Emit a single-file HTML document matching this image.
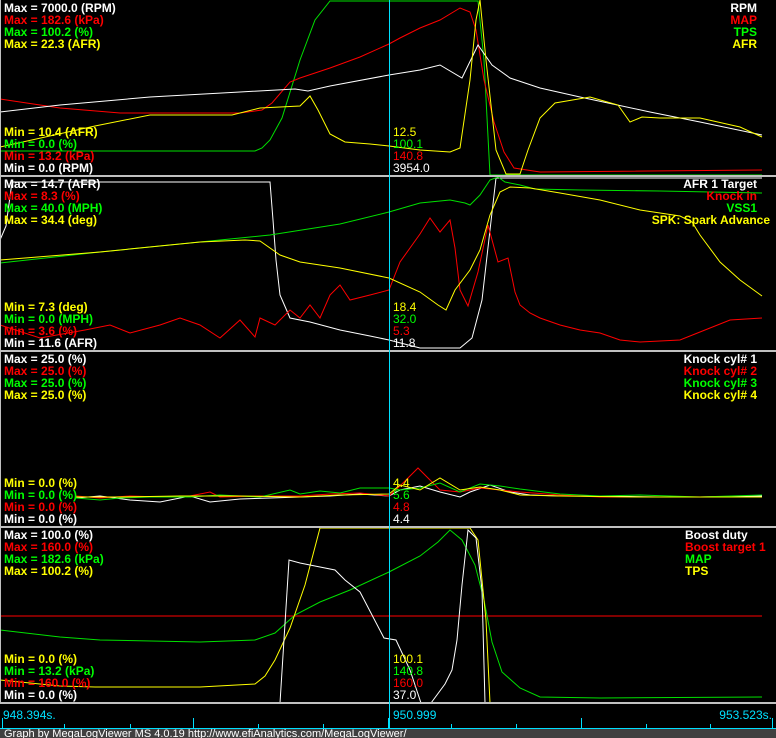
<!DOCTYPE html>
<html><head><meta charset="utf-8"><style>
html,body{margin:0;padding:0;background:#000;}
svg{display:block}
text{font-family:"Liberation Sans",Arial,sans-serif;font-size:12px;}
.b{font-weight:bold}
.r{text-anchor:end}
</style></head><body>
<svg width="776" height="738" viewBox="0 0 776 738" xmlns="http://www.w3.org/2000/svg">
<rect width="776" height="738" fill="#000"/>
<g fill="none" stroke-width="1">
<!-- Panel 1 -->
<polyline stroke="#00e000" points="0,151 255,151 262,148 270,140 282,118 300,60 315,20 330,1 478,1 484,60 490,175 762,175"/>
<polyline stroke="#ff0000" points="0,99 60,108 120,113 240,113 262,110 272,103 290,82 300,78 330,68 360,57 389,44 400,38 420,28 440,20 460,8 470,12 476,30 484,80 494,122 504,152 514,168 540,172 762,170"/>
<polyline stroke="#ffffff" points="0,112 60,105 150,97 240,92 295,89 308,91 330,86 389,75 420,70 440,65 462,78 478,45 492,65 510,78 540,88 580,97 650,112 700,122 762,135"/>
<polyline stroke="#ffff00" points="0,147 95,126 150,115 232,115 260,108 300,106 310,96 318,110 330,134 345,142 370,144 389,146 420,150 450,152 460,148 470,80 476,20 480,0 486,60 496,150 506,174 520,174 528,150 540,118 555,103 590,97 618,105 630,122 642,117 660,118 700,118 740,127 762,137"/>
<!-- Panel 2 -->
<polyline stroke="#ffffff" points="0,240 6,226 12,182 270,182 273,220 276,260 280,295 290,318 310,322 340,330 370,336 389,340 420,348 460,348 472,338 482,300 490,230 496,178 762,178"/>
<polyline stroke="#00e000" points="0,263 100,252 200,242 270,235 340,224 389,212 420,203 450,200 465,203 470,205 480,195 490,180 498,177 505,182 520,185 535,189 580,190 660,191 762,193"/>
<polyline stroke="#ff0000" points="0,325 40,338 85,330 110,325 130,333 160,325 180,318 200,325 220,338 240,320 255,337 260,318 275,325 290,310 300,318 310,305 320,318 330,295 340,285 350,300 370,295 389,290 400,262 410,248 420,234 430,218 440,232 450,220 455,248 460,290 468,306 478,272 488,225 498,262 508,258 515,292 520,305 530,313 540,318 560,325 580,330 600,333 620,340 640,342 680,340 700,332 730,320 762,318"/>
<polyline stroke="#ffff00" points="0,260 100,252 200,242 245,240 260,241 280,255 300,262 340,268 389,278 420,292 438,305 446,310 455,290 470,270 480,250 490,215 500,192 510,187 530,188 560,193 600,200 640,210 680,216 692,222 700,235 720,262 740,280 762,296"/>
<!-- Panel 3 -->
<polyline stroke="#ffffff" points="76,498 100,496 130,500 160,502 190,496 210,502 240,499 270,498 300,497 330,496 360,494 389,496 400,490 420,486 440,492 460,497 470,492 490,485 510,492 530,495 560,496 600,496 660,497 700,497 762,496"/>
<polyline stroke="#ff0000" points="76,496 100,498 130,496 160,497 190,496 210,492 220,497 260,496 300,496 330,494 360,493 389,496 400,486 418,468 430,480 440,490 460,492 480,488 500,490 520,492 560,495 600,497 700,497 762,497"/>
<polyline stroke="#00e000" points="76,498 100,500 120,498 150,497 190,497 220,495 260,497 290,490 300,494 320,491 340,493 360,488 389,488 400,490 420,488 440,483 460,492 480,484 500,486 520,489 560,494 600,496 640,495 700,497 762,495"/>
<polyline stroke="#ffff00" points="76,497 120,497 180,496 240,496 300,497 340,495 389,494 400,485 420,490 440,478 460,490 480,487 500,490 520,495 560,496 640,497 700,497 762,497"/>
<!-- Panel 4 -->
<polyline stroke="#ff0000" points="0,616 762,616"/>
<polyline stroke="#00e000" points="0,630 60,637 100,640 200,642 255,640 275,633 295,615 320,602 350,590 389,572 420,556 438,542 450,530 462,540 475,565 484,600 492,642 502,672 520,688 540,697 600,698 762,697"/>
<polyline stroke="#ffff00" points="0,680 60,686 95,687 200,687 255,684 265,676 275,660 290,628 305,585 320,528 470,528 478,540 486,620 490,703 762,703"/>
<polyline stroke="#ffffff" points="280,703 289,560 300,563 315,566 335,570 345,580 360,592 372,615 384,638 396,640 410,670 421,703 431,703 445,684 452,670 457,640 462,585 468,530 476,538 482,590 485,703"/>
</g>
<!-- separators -->
<g fill="#c0c0c0">
<rect x="0" y="175" width="776" height="2"/>
<rect x="0" y="350" width="776" height="2"/>
<rect x="0" y="526" width="776" height="2"/>
<rect x="0" y="702" width="776" height="2"/>
<rect x="0" y="0" width="1" height="703"/>
</g>
<!-- cursor -->
<rect x="389" y="0" width="1" height="730" fill="#00e0ff"/>
<!-- Panel 1 labels -->
<g class="b">
<text x="4" y="12" fill="#fff">Max = 7000.0 (RPM)</text>
<text x="4" y="24" fill="#f00">Max = 182.6 (kPa)</text>
<text x="4" y="36" fill="#0f0">Max = 100.2 (%)</text>
<text x="4" y="48" fill="#ff0">Max = 22.3 (AFR)</text>
<text x="4" y="136" fill="#ff0">Min = 10.4 (AFR)</text>
<text x="4" y="148" fill="#0f0">Min = 0.0 (%)</text>
<text x="4" y="160" fill="#f00">Min = 13.2 (kPa)</text>
<text x="4" y="172" fill="#fff">Min = 0.0 (RPM)</text>
<text x="757" y="12" class="r" fill="#fff">RPM</text>
<text x="757" y="24" class="r" fill="#f00">MAP</text>
<text x="757" y="36" class="r" fill="#0f0">TPS</text>
<text x="757" y="48" class="r" fill="#ff0">AFR</text>
</g>
<text x="393" y="136" fill="#ff0">12.5</text>
<text x="393" y="148" fill="#0f0">100.1</text>
<text x="393" y="160" fill="#f00">140.8</text>
<text x="393" y="172" fill="#fff">3954.0</text>
<!-- Panel 2 -->
<g class="b">
<text x="4" y="188" fill="#fff">Max = 14.7 (AFR)</text>
<text x="4" y="200" fill="#f00">Max = 8.3 (%)</text>
<text x="4" y="212" fill="#0f0">Max = 40.0 (MPH)</text>
<text x="4" y="224" fill="#ff0">Max = 34.4 (deg)</text>
<text x="4" y="311" fill="#ff0">Min = 7.3 (deg)</text>
<text x="4" y="323" fill="#0f0">Min = 0.0 (MPH)</text>
<text x="4" y="335" fill="#f00">Min = 3.6 (%)</text>
<text x="4" y="347" fill="#fff">Min = 11.6 (AFR)</text>
<text x="757" y="188" class="r" fill="#fff">AFR 1 Target</text>
<text x="757" y="200" class="r" fill="#f00">Knock in</text>
<text x="757" y="212" class="r" fill="#0f0">VSS1</text>
<text x="770" y="224" class="r" fill="#ff0">SPK: Spark Advance</text>
</g>
<text x="393" y="311" fill="#ff0">18.4</text>
<text x="393" y="323" fill="#0f0">32.0</text>
<text x="393" y="335" fill="#f00">5.3</text>
<text x="393" y="347" fill="#fff">11.8</text>
<!-- Panel 3 -->
<g class="b">
<text x="4" y="363" fill="#fff">Max = 25.0 (%)</text>
<text x="4" y="375" fill="#f00">Max = 25.0 (%)</text>
<text x="4" y="387" fill="#0f0">Max = 25.0 (%)</text>
<text x="4" y="399" fill="#ff0">Max = 25.0 (%)</text>
<text x="4" y="487" fill="#ff0">Min = 0.0 (%)</text>
<text x="4" y="499" fill="#0f0">Min = 0.0 (%)</text>
<text x="4" y="511" fill="#f00">Min = 0.0 (%)</text>
<text x="4" y="523" fill="#fff">Min = 0.0 (%)</text>
<text x="757" y="363" class="r" fill="#fff">Knock cyl# 1</text>
<text x="757" y="375" class="r" fill="#f00">Knock cyl# 2</text>
<text x="757" y="387" class="r" fill="#0f0">Knock cyl# 3</text>
<text x="757" y="399" class="r" fill="#ff0">Knock cyl# 4</text>
</g>
<text x="393" y="487" fill="#ff0">4.4</text>
<text x="393" y="499" fill="#0f0">5.6</text>
<text x="393" y="511" fill="#f00">4.8</text>
<text x="393" y="523" fill="#fff">4.4</text>
<!-- Panel 4 -->
<g class="b">
<text x="4" y="539" fill="#fff">Max = 100.0 (%)</text>
<text x="4" y="551" fill="#f00">Max = 160.0 (%)</text>
<text x="4" y="563" fill="#0f0">Max = 182.6 (kPa)</text>
<text x="4" y="575" fill="#ff0">Max = 100.2 (%)</text>
<text x="4" y="663" fill="#ff0">Min = 0.0 (%)</text>
<text x="4" y="675" fill="#0f0">Min = 13.2 (kPa)</text>
<text x="4" y="687" fill="#f00">Min = 160.0 (%)</text>
<text x="4" y="699" fill="#fff">Min = 0.0 (%)</text>
<text x="685" y="539" fill="#fff">Boost duty</text>
<text x="685" y="551" fill="#f00">Boost target 1</text>
<text x="685" y="563" fill="#0f0">MAP</text>
<text x="685" y="575" fill="#ff0">TPS</text>
</g>
<text x="393" y="663" fill="#ff0">100.1</text>
<text x="393" y="675" fill="#0f0">140.8</text>
<text x="393" y="687" fill="#f00">160.0</text>
<text x="393" y="699" fill="#fff">37.0</text>
<!-- time axis -->
<text x="3" y="719" fill="#00e0ff">948.394s.</text>
<text x="393" y="719" fill="#00e0ff">950.999</text>
<text x="772" y="719" class="r" fill="#00e0ff">953.523s.</text>
<g fill="#00e0ff">
<rect x="0" y="728" width="776" height="1"/>
<rect x="2" y="718" width="1" height="10"/>
<rect x="193" y="718" width="1" height="10"/>
<rect x="388" y="718" width="1" height="10"/>
<rect x="581" y="718" width="1" height="10"/>
<rect x="772" y="718" width="1" height="10"/>
<rect x="64" y="724" width="1" height="4"/>
<rect x="130" y="724" width="1" height="4"/>
<rect x="258" y="724" width="1" height="4"/>
<rect x="323" y="724" width="1" height="4"/>
<rect x="451" y="724" width="1" height="4"/>
<rect x="516" y="724" width="1" height="4"/>
<rect x="646" y="724" width="1" height="4"/>
<rect x="710" y="724" width="1" height="4"/>
</g>
<rect x="0" y="729" width="776" height="9" fill="#404040"/>
<text x="4" y="737" fill="#fff" style="font-size:11px">Graph by MegaLogViewer MS 4.0.19 http://www.efiAnalytics.com/MegaLogViewer/</text>
</svg>
</body></html>
